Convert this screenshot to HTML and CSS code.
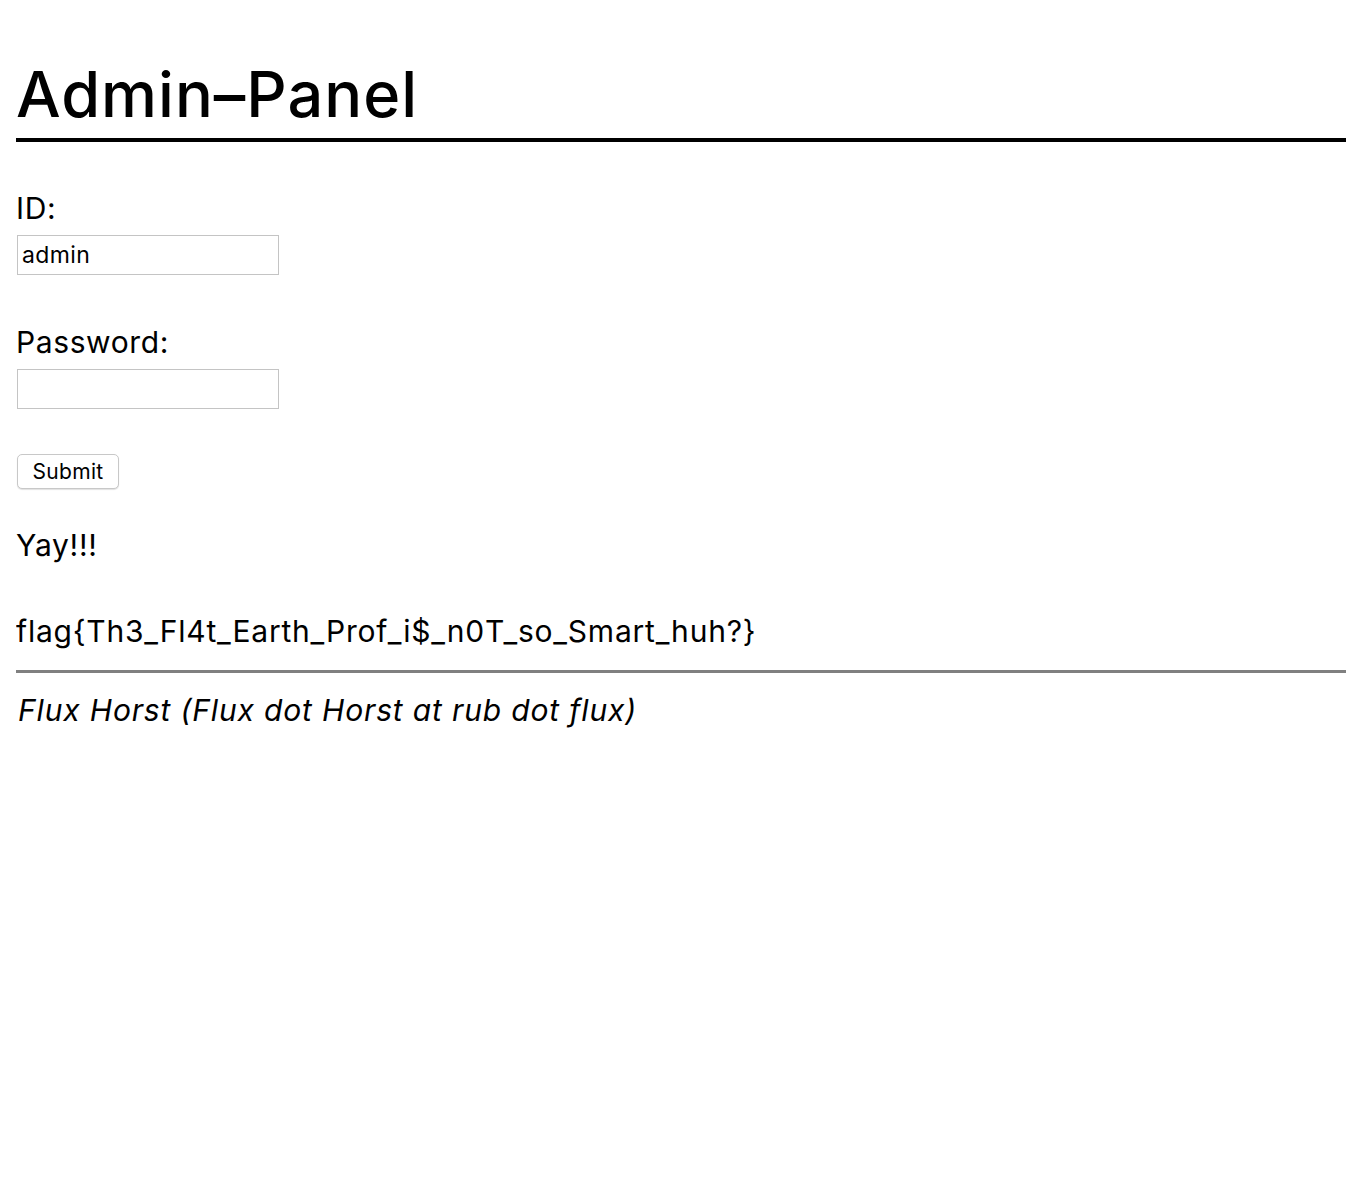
FILE: index.html
```html
<!DOCTYPE html>
<html>
<head>
<meta charset="utf-8">
<title>Admin-Panel</title>
<link rel="stylesheet" href="styles.css">
</head>
<body>
<h1 class="title">Admin–Panel</h1>
<form class="login">
  <label class="field-label" for="id">ID:</label>
  <input class="field-input" id="id" type="text" value="admin">
  <label class="field-label pw" for="pw">Password:</label>
  <input class="field-input" id="pw" type="password">
  <button class="submit" type="button">Submit</button>
</form>
<p class="msg">Yay!!!</p>
<p class="flag">flag{Th3_Fl4t_Earth_Prof_i$_n0T_so_Smart_huh?}</p>
<hr class="rule">
<address class="footer">Flux Horst (Flux dot Horst at rub dot flux)</address>
</body>
</html>
```
FILE: styles.css
```css
html, body {
  background: #fff;
}
body {
  margin: 0 0 0 16px;
  font-family: Inter, "Liberation Sans", Arial, sans-serif;
  color: #000;
}
.title {
  margin: 0;
  padding-top: 58px;
  font-size: 63px;
  letter-spacing: 1px;
  line-height: 72px;
  font-weight: 500;
  border-bottom: 4px solid #000;
  padding-bottom: 8px;
}
.login {
  display: flex;
  flex-direction: column;
  align-items: flex-start;
  padding-top: 48px;
}
.field-label {
  font-size: 30px;
  letter-spacing: 0.6px;
  line-height: 36px;
}
.field-input {
  margin: 9px 0 0 1px;
  width: 262px;
  height: 40px;
  box-sizing: border-box;
  border: 1px solid #c4c4c4;
  padding: 0 4px;
  font-family: Inter, "Liberation Sans", Arial, sans-serif;
  font-size: 23px;
  letter-spacing: 0.4px;
  color: #000;
  background: #fff;
  outline: none;
}
.pw {
  margin-top: 49px;
}
.submit {
  margin: 45px 0 0 1px;
  width: 102px;
  height: 35px;
  box-sizing: border-box;
  border: 1px solid #c8c8c8;
  border-radius: 5px;
  background: #fff;
  box-shadow: 0 1px 1px rgba(0,0,0,0.12);
  font-family: Inter, "Liberation Sans", Arial, sans-serif;
  font-size: 21px;
  letter-spacing: 0.3px;
  color: #000;
  padding: 0;
}
.msg {
  margin: 38px 0 0;
  font-size: 30px;
  letter-spacing: 0.7px;
  line-height: 36px;
}
.flag {
  margin: 50px 0 0;
  font-size: 30px;
  letter-spacing: 0.78px;
  line-height: 36px;
}
.rule {
  margin: 21px 0 0;
  border: 0;
  height: 3px;
  background: #808080;
}
.footer {
  margin: 19px 0 0 2px;
  font-size: 30px;
  letter-spacing: 0.84px;
  line-height: 36px;
  font-style: italic;
}
```
